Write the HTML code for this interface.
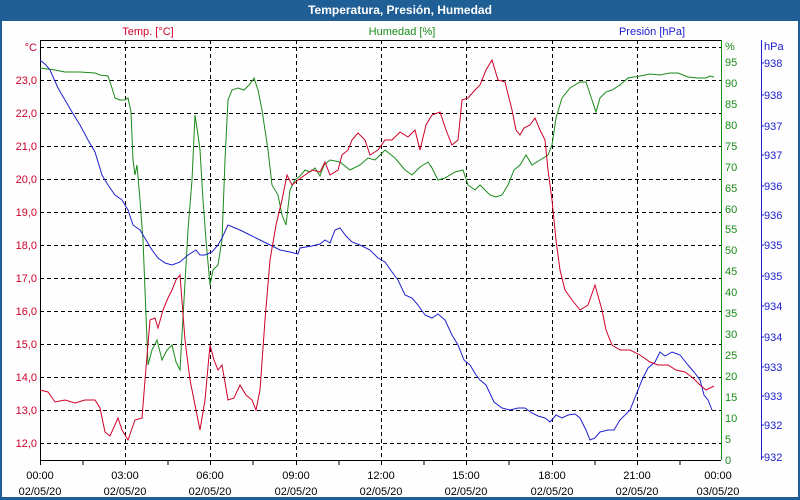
<!DOCTYPE html>
<html><head><meta charset="utf-8"><style>
html,body{margin:0;padding:0;width:800px;height:500px;overflow:hidden;background:#fff}
svg{display:block}
text{font-family:"Liberation Sans","DejaVu Sans",sans-serif;font-size:11px}
</style></head><body>
<svg width="800" height="500" viewBox="0 0 800 500">
<rect x="0" y="0" width="800" height="500" fill="#1f5f96"/>
<rect x="2" y="21" width="796" height="476" fill="#fdfefd"/>
<text x="400" y="14" text-anchor="middle" fill="#fff" font-weight="bold" style="font-size:12px">Temperatura, Presión, Humedad</text>
<text x="148" y="35" text-anchor="middle" fill="#d0002a">Temp. [°C]</text>
<text x="402" y="35" text-anchor="middle" fill="#1a8a1a">Humedad [%]</text>
<text x="652" y="35" text-anchor="middle" fill="#2020d0">Presión [hPa]</text>
<g stroke="#000" stroke-dasharray="4,3" stroke-width="1">
<path d="M40 47.5H721M40 80.5H721M40 113.5H721M40 146.5H721M40 179.5H721M40 212.5H721M40 245.5H721M40 278.5H721M40 311.5H721M40 344.5H721M40 377.5H721M40 410.5H721M40 443.5H721"/>
<path d="M125.5 40V460M210.5 40V460M296.5 40V460M381.5 40V460M466.5 40V460M552.5 40V460M637.5 40V460"/>
</g>
<path d="M40.5 40V460.5H721M40 40.5H721" stroke="#000" fill="none"/>
<path d="M83 460v5M125.5 460v5M168 460v5M210.5 460v5M253 460v5M296.5 460v5M339 460v5M381.5 460v5M424 460v5M466.5 460v5M509 460v5M552.5 460v5M595 460v5M637.5 460v5M680 460v5M40.5 460v5" stroke="#000"/>
<g fill="#d0002a" text-anchor="end">
<text x="37" y="51">°C</text><text x="37" y="84">23,0</text><text x="37" y="117">22,0</text><text x="37" y="150">21,0</text><text x="37" y="183">20,0</text><text x="37" y="216">19,0</text><text x="37" y="249">18,0</text><text x="37" y="282">17,0</text><text x="37" y="315">16,0</text><text x="37" y="348">15,0</text><text x="37" y="381">14,0</text><text x="37" y="414">13,0</text><text x="37" y="447">12,0</text>
</g>
<path d="M721.5 40V460" stroke="#1a8a1a"/>
<g fill="#1a8a1a">
<text x="725" y="50">%</text>
<text x="725" y="66">95</text><text x="725" y="87">90</text><text x="725" y="108">85</text><text x="725" y="129">80</text><text x="725" y="150">75</text><text x="725" y="171">70</text><text x="725" y="192">65</text><text x="725" y="213">60</text><text x="725" y="233">55</text><text x="725" y="254">50</text><text x="725" y="275">45</text><text x="725" y="296">40</text><text x="725" y="317">35</text><text x="725" y="338">30</text><text x="725" y="359">25</text><text x="725" y="380">20</text><text x="725" y="401">15</text><text x="725" y="422">10</text><text x="725" y="443">5</text><text x="725" y="464">0</text>
</g>
<path d="M761.5 40V460" stroke="#2020d0"/>
<g fill="#2020d0">
<text x="764" y="50">hPa</text>
<text x="764" y="67">938</text><text x="764" y="99">938</text><text x="764" y="130">937</text><text x="764" y="159">937</text><text x="764" y="190">936</text><text x="764" y="219">936</text><text x="764" y="249">935</text><text x="764" y="280">935</text><text x="764" y="310">934</text><text x="764" y="341">934</text><text x="764" y="371">933</text><text x="764" y="400">933</text><text x="764" y="429">932</text><text x="764" y="461">932</text>
</g>
<path d="M761 63h3M761 95h3M761 126h3M761 155h3M761 186h3M761 215h3M761 245h3M761 276h3M761 306h3M761 337h3M761 367h3M761 396h3M761 425h3M761 457h3" stroke="#2020d0"/>
<g fill="#000" text-anchor="middle">
<text x="40" y="479">00:00</text><text x="40" y="495">02/05/20</text>
<text x="125" y="479">03:00</text><text x="125" y="495">02/05/20</text>
<text x="210" y="479">06:00</text><text x="210" y="495">02/05/20</text>
<text x="296" y="479">09:00</text><text x="296" y="495">02/05/20</text>
<text x="381" y="479">12:00</text><text x="381" y="495">02/05/20</text>
<text x="466" y="479">15:00</text><text x="466" y="495">02/05/20</text>
<text x="552" y="479">18:00</text><text x="552" y="495">02/05/20</text>
<text x="637" y="479">21:00</text><text x="637" y="495">02/05/20</text>
<text x="718" y="479">00:00</text><text x="718" y="495">03/05/20</text>
</g>
<polyline fill="none" stroke="#1a8a1a" points="40,68 55,70 65,72 80,72 95,73 100,75 108,76 112,88 115,98 120,100 125,100 128,98 131,112 133,160 135,175 137,165 140,200 143,240 148,365 152,350 157,340 162,360 167,350 172,345 176,362 180,370 184,300 188,230 192,180 195,115 198,135 200,150 203,200 206,240 210,285 213,270 218,265 222,240 225,160 228,100 232,90 238,88 244,90 250,84 254,78 258,90 262,110 268,150 272,185 278,195 282,215 286,225 290,190 295,180 300,176 305,170 310,172 315,168 320,176 324,165 330,160 340,162 350,170 360,165 368,158 375,160 385,150 395,158 405,170 412,175 420,167 428,162 432,168 438,180 445,178 455,172 463,170 468,185 475,190 480,185 490,195 496,197 502,195 508,185 514,170 520,165 526,155 532,165 540,160 548,155 552,145 556,118 562,98 570,88 580,82 586,82 592,100 596,112 600,98 606,92 612,90 620,85 628,78 640,76 650,74 660,75 670,73 678,73 688,77 698,78 706,78 710,76 714,77"/>
<polyline fill="none" stroke="#2020d0" points="40,60 46,65 50,70 58,88 65,100 72,112 80,125 88,140 95,152 102,175 108,185 115,195 122,200 128,210 133,225 140,230 146,240 152,250 158,258 165,263 172,265 180,262 188,255 196,250 200,255 205,255 212,252 218,245 222,238 228,225 235,228 240,230 250,235 260,240 270,245 280,250 290,252 298,254 300,248 312,246 320,244 325,240 330,243 335,230 340,228 346,236 352,242 360,245 370,250 378,258 385,262 392,272 398,280 405,295 412,298 418,305 425,315 432,318 438,314 445,320 452,335 458,345 464,360 470,365 476,375 480,380 486,385 494,402 502,408 510,410 518,408 525,408 532,413 538,416 545,418 550,422 556,415 562,418 568,415 575,414 580,418 586,430 590,440 595,438 600,432 608,430 614,430 620,420 630,410 636,395 642,380 648,368 655,362 660,352 665,356 672,352 680,355 688,365 694,372 700,380 704,395 708,400 712,410"/>
<polyline fill="none" stroke="#d0002a" points="40,390 48,392 55,402 65,400 75,403 85,400 95,400 100,408 105,432 110,436 118,418 122,430 128,440 135,420 142,418 145,380 150,320 155,318 158,328 163,310 168,298 172,290 176,280 180,275 185,340 190,380 196,410 200,430 205,400 210,345 214,360 218,370 222,365 228,400 234,398 240,385 246,395 252,400 256,410 260,390 265,320 270,260 276,225 282,200 287,175 292,185 298,180 305,175 312,170 320,172 325,162 330,175 338,170 342,155 348,150 352,140 358,133 365,140 370,155 378,150 385,140 392,140 400,132 408,137 415,130 420,150 426,125 432,115 440,112 446,130 452,145 458,140 462,100 468,98 475,90 480,85 486,70 492,60 498,80 505,82 512,110 516,130 520,135 524,128 530,125 535,118 540,130 545,140 548,170 552,200 556,240 560,270 565,290 572,300 580,310 588,305 595,285 602,310 606,330 612,345 620,350 630,350 640,355 650,362 658,365 668,365 676,370 685,372 693,378 700,385 706,390 714,386"/>
</svg>
</body></html>
